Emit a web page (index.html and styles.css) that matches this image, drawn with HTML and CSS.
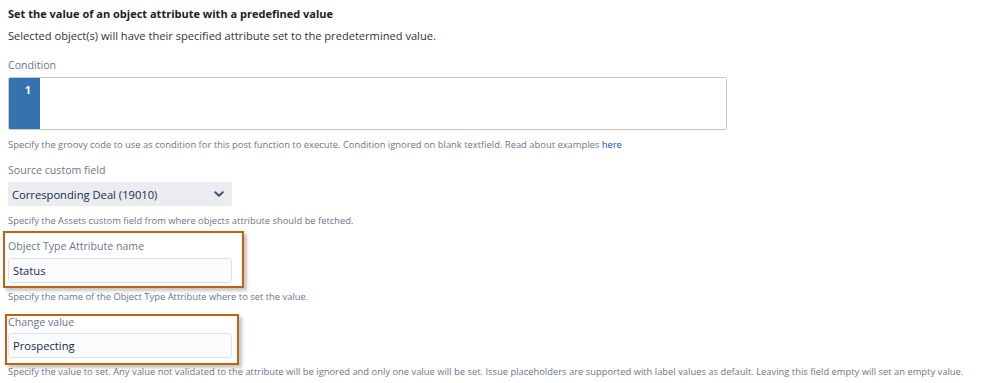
FILE: index.html
```html
<!DOCTYPE html>
<html>
<head>
<meta charset="utf-8">
<link rel="stylesheet" href="styles.css">
</head>
<body>
<div class="page">
  <div class="title">Set the value of an object attribute with a predefined value</div>
  <div class="desc">Selected object(s) will have their specified attribute set to the predetermined value.</div>

  <div class="label label-first">Condition</div>
  <div class="editor">
    <div class="gutter">1</div>
    <div class="code"></div>
  </div>
  <div class="help">Specify the groovy code to use as condition for this post function to execute. Condition ignored on blank textfield. Read about examples <a class="link">here</a></div>

  <div class="label">Source custom field</div>
  <div class="select">
    <span>Corresponding Deal (19010)</span>
    <svg class="chev" width="10" height="6" viewBox="0 0 10 6"><path d="M1.2 1.2 L5 4.8 L8.8 1.2" fill="none" stroke="#42526e" stroke-width="2" stroke-linecap="round" stroke-linejoin="round"/></svg>
  </div>
  <div class="help">Specify the Assets custom field from where objects attribute should be fetched.</div>

  <div class="field field-one">
    <div class="label label-in">Object Type Attribute name</div>
    <div class="input">Status</div>
    <div class="mark mark-one"></div>
  </div>
  <div class="help help-tight">Specify the name of the Object Type Attribute where to set the value.</div>

  <div class="field field-two">
    <div class="label label-in">Change value</div>
    <div class="input input-two">Prospecting</div>
    <div class="mark mark-two"></div>
  </div>
  <div class="help help-tight help-last">Specify the value to set. Any value not validated to the attribute will be ignored and only one value will be set. Issue placeholders are supported with label values as default. Leaving this field empty will set an empty value.</div>
</div>
</body>
</html>
```

FILE: styles.css
```css
html, body {
  margin: 0;
  padding: 0;
  background: #ffffff;
}
body {
  font-family: "Open Sans", "Noto Sans", sans-serif;
  color: #172b4d;
  width: 981px;
  height: 383px;
  overflow: hidden;
}
.page {
  padding: 6px 8px 0 8px;
}
.title {
  font-size: 11px;
  font-weight: 700;
  line-height: 16px;
  color: #1d2125;
}
.desc {
  margin-top: 6px;
  font-size: 11.1px;
  line-height: 16px;
  color: #333333;
}
.label {
  margin-top: 10px;
  font-size: 10.6px;
  line-height: 16px;
  color: #6b778c;
  font-weight: 400;
}
.label-first {
  margin-top: 13px;
}
.editor {
  margin-top: 4px;
  width: 719px;
  height: 53px;
  box-sizing: border-box;
  border: 1px solid #c8c8c8;
  border-radius: 2px;
  display: flex;
  overflow: hidden;
  box-shadow: inset 0 1px 2px rgba(0,0,0,0.08);
}
.gutter {
  width: 31px;
  background: #3572b0;
  color: #ffffff;
  font-size: 11px;
  font-weight: 700;
  line-height: 16px;
  padding-top: 4px;
  box-sizing: border-box;
  text-align: right;
  padding-right: 9px;
}
.code {
  flex: 1;
  background: #ffffff;
}
.help {
  margin-top: 8px;
  font-size: 9.4px;
  line-height: 14px;
  color: #6b778c;
  white-space: nowrap;
}
.help-tight {
  margin-top: 7px;
}
.link {
  color: #0052cc;
  text-decoration: none;
}
.select {
  margin-top: 4px;
  width: 224px;
  height: 24px;
  box-sizing: border-box;
  background: #ebecf0;
  border-radius: 3px;
  display: flex;
  align-items: center;
  justify-content: space-between;
  padding: 0 8px 0 4px;
  font-size: 11.2px;
  color: #172b4d;
}
.chev {
  display: block;
}
.field {
  position: relative;
}
.field-one {
  margin-top: 10px;
}
.field-two {
  margin-top: 10px;
}
.label-in {
  margin-top: 0;
}
.input {
  margin-top: 4px;
  width: 224px;
  height: 25px;
  box-sizing: border-box;
  background: #fafbfc;
  border: 1px solid #dfe1e6;
  border-radius: 3px;
  display: flex;
  align-items: center;
  padding: 0 4px;
  font-size: 11.2px;
  color: #172b4d;
}
.input-two {
  margin-top: 3px;
}
.mark {
  position: absolute;
  border: 2px solid #c5600f;
  box-sizing: border-box;
  box-shadow: 3px 3px 3px rgba(0,0,0,0.22);
  pointer-events: none;
}
.mark-one {
  left: -5px;
  top: -7px;
  width: 241px;
  height: 57px;
}
.mark-two {
  left: -3px;
  top: 0;
  width: 234px;
  height: 51px;
}
```
